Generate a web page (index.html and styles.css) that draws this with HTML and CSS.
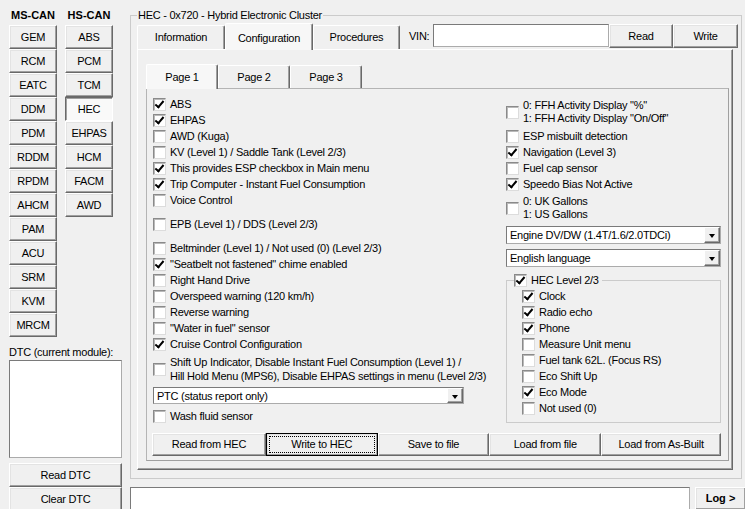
FILE: index.html
```html
<!DOCTYPE html>
<html lang="en">

<head>
  <meta charset="UTF-8">
  <meta name="viewport" content="width=device-width, initial-scale=1.0">
  <title>HEC - Configuration</title>
  <link rel="stylesheet" href="styles.css">
</head>

<body>
  <div class="app">
    <!-- module list -->
    <aside class="side">
      <div class="can">
        <div class="can-col">
          <h3>MS-CAN</h3>
          <button class="btn">GEM</button>
          <button class="btn">RCM</button>
          <button class="btn">EATC</button>
          <button class="btn">DDM</button>
          <button class="btn">PDM</button>
          <button class="btn">RDDM</button>
          <button class="btn">RPDM</button>
          <button class="btn">AHCM</button>
          <button class="btn">PAM</button>
          <button class="btn">ACU</button>
          <button class="btn">SRM</button>
          <button class="btn">KVM</button>
          <button class="btn">MRCM</button>
        </div>
        <div class="can-col">
          <h3>HS-CAN</h3>
          <button class="btn">ABS</button>
          <button class="btn">PCM</button>
          <button class="btn">TCM</button>
          <button class="btn down">HEC</button>
          <button class="btn">EHPAS</button>
          <button class="btn">HCM</button>
          <button class="btn">FACM</button>
          <button class="btn">AWD</button>
        </div>
      </div>
      <div class="dtc-label">DTC (current module):</div>
      <div class="field dtc-box"></div>
      <button class="btn wide read-dtc">Read DTC</button>
      <button class="btn wide">Clear DTC</button>
    </aside>

    <main class="main">
      <fieldset class="group module">
        <legend>HEC - 0x720 - Hybrid Electronic Cluster</legend>

        <!-- tabs + VIN -->
        <div class="topbar">
          <div class="tab main-tab">Information</div>
          <div class="tab main-tab active">Configuration</div>
          <div class="tab main-tab narrow">Procedures</div>
          <span class="vin-label">VIN:</span>
          <div class="field vin"></div>
          <button class="btn vin-btn">Read</button>
          <button class="btn vin-btn write">Write</button>
        </div>

        <div class="tabpanel">
          <div class="pagetabs">
            <div class="tab page-tab active">Page 1</div>
            <div class="tab page-tab">Page 2</div>
            <div class="tab page-tab">Page 3</div>
          </div>

          <div class="page">
            <div class="cols">
              <div class="col-left">
                <label class="opt"><span class="chk on"></span>ABS</label>
                <label class="opt"><span class="chk on"></span>EHPAS</label>
                <label class="opt"><span class="chk"></span>AWD (Kuga)</label>
                <label class="opt"><span class="chk"></span>KV (Level 1) / Saddle Tank (Level 2/3)</label>
                <label class="opt"><span class="chk on"></span>This provides ESP checkbox in Main menu</label>
                <label class="opt"><span class="chk on"></span>Trip Computer - Instant Fuel Consumption</label>
                <label class="opt"><span class="chk"></span>Voice Control</label>
                <label class="opt sep"><span class="chk"></span>EPB (Level 1) / DDS (Level 2/3)</label>
                <label class="opt sep"><span class="chk"></span>Beltminder (Level 1) / Not used (0) (Level 2/3)</label>
                <label class="opt"><span class="chk on"></span>"Seatbelt not fastened" chime enabled</label>
                <label class="opt"><span class="chk"></span>Right Hand Drive</label>
                <label class="opt"><span class="chk"></span>Overspeed warning (120 km/h)</label>
                <label class="opt"><span class="chk"></span>Reverse warning</label>
                <label class="opt"><span class="chk"></span>"Water in fuel" sensor</label>
                <label class="opt"><span class="chk on"></span>Cruise Control Configuration</label>
                <label class="opt two shift"><span class="chk"></span><span>Shift Up Indicator, Disable Instant Fuel Consumption (Level 1) /<br>Hill Hold Menu (MPS6), Disable EHPAS settings in menu (Level 2/3)</span></label>
                <div class="field combo ptc"><span class="combo-text">PTC (status report only)</span><span class="combo-btn"></span></div>
                <label class="opt wash"><span class="chk"></span>Wash fluid sensor</label>
              </div>

              <div class="col-right">
                <label class="opt two ffh"><span class="chk"></span><span>0: FFH Activity Display "%"<br>1: FFH Activity Display "On/Off"</span></label>
                <label class="opt after-two"><span class="chk"></span>ESP misbuilt detection</label>
                <label class="opt"><span class="chk on"></span>Navigation (Level 3)</label>
                <label class="opt"><span class="chk"></span>Fuel cap sensor</label>
                <label class="opt"><span class="chk on"></span>Speedo Bias Not Active</label>
                <label class="opt two gallons"><span class="chk"></span><span>0: UK Gallons<br>1: US Gallons</span></label>
                <div class="field combo small"><span class="combo-text">Engine DV/DW (1.4T/1.6/2.0TDCi)</span><span class="combo-btn"></span></div>
                <div class="field combo small"><span class="combo-text">English language</span><span class="combo-btn"></span></div>

                <fieldset class="group level">
                  <legend><label class="opt"><span class="chk on"></span>HEC Level 2/3</label></legend>
                  <div class="level-list">
                    <label class="opt"><span class="chk on"></span>Clock</label>
                    <label class="opt"><span class="chk on"></span>Radio echo</label>
                    <label class="opt"><span class="chk on"></span>Phone</label>
                    <label class="opt"><span class="chk"></span>Measure Unit menu</label>
                    <label class="opt"><span class="chk"></span>Fuel tank 62L. (Focus RS)</label>
                    <label class="opt"><span class="chk"></span>Eco Shift Up</label>
                    <label class="opt"><span class="chk on"></span>Eco Mode</label>
                    <label class="opt"><span class="chk"></span>Not used (0)</label>
                  </div>
                </fieldset>
              </div>
            </div>

            <div class="actions">
              <button class="btn act first">Read from HEC</button>
              <button class="btn act focus">Write to HEC</button>
              <button class="btn act">Save to file</button>
              <button class="btn act">Load from file</button>
              <button class="btn act last">Load from As-Built</button>
            </div>
          </div>
        </div>
      </fieldset>

      <!-- log line -->
      <div class="logbar">
        <div class="field logbox"></div>
        <button class="btn log">Log &gt;</button>
      </div>
    </main>
  </div>
</body>

</html>
```

FILE: styles.css
```css
/* base */
* {
  box-sizing: border-box;
}

body {
  margin: 0;
  background: #f0f0f0;
  font-family: "Liberation Sans", Arial, sans-serif;
  font-size: 11px;
  line-height: 13px;
  letter-spacing: -0.25px;
  color: #000;
  overflow: hidden;
}

.app {
  display: flex;
  width: 745px;
  height: 509px;
  overflow: hidden;
}

/* classic 3D button */
.btn {
  display: flex;
  align-items: center;
  justify-content: center;
  margin: 0;
  padding: 0;
  font: inherit;
  letter-spacing: inherit;
  color: #000;
  background: #f0f0f0;
  border: 1px solid;
  border-color: #fff #696969 #696969 #fff;
  box-shadow: inset -1px -1px #a0a0a0, inset 1px 1px #e3e3e3;
}

.btn.down {
  background: #f9f9f9;
  border-color: #696969 #fff #fff #696969;
  box-shadow: inset 1px 1px #a0a0a0;
}

.field {
  background: #fff;
  border: 1px solid;
  border-color: #7a7a7a #ababab #ababab #7a7a7a;
}

/* left side */
.side {
  width: 125px;
  flex: none;
  padding: 8px 0 0 9px;
}

.can {
  display: flex;
  gap: 8px;
  align-items: flex-start;
}

.can-col {
  width: 48px;
  display: flex;
  flex-direction: column;
}

.can-col h3 {
  margin: 0 0 3px;
  font-size: 11px;
  line-height: 14px;
  font-weight: bold;
  letter-spacing: 0;
  text-align: center;
}

.can-col .btn {
  height: 24px;
}

.dtc-label {
  margin-top: 8px;
  line-height: 14px;
}

.dtc-box {
  width: 113px;
  height: 98px;
  margin-top: 1px;
}

.btn.wide {
  width: 113px;
  height: 24px;
}

.read-dtc {
  margin-top: 5px;
}

/* main area */
.main {
  width: 620px;
  flex: none;
  display: flex;
  flex-direction: column;
}

.group {
  margin: 0;
  min-width: 0;
  border: 1px solid #cbcbcb;
}

.module {
  margin: 8px 3px 0 5px;
  padding: 1px 8px 8px 6px;
}

.module > legend {
  padding: 0 1px;
  line-height: 14px;
}

.topbar {
  display: flex;
  align-items: flex-end;
  height: 26px;
  margin-right: -5px;
}

.tab {
  display: flex;
  align-items: center;
  justify-content: center;
  height: 24px;
  background: #f0f0f0;
  border: 1px solid;
  border-bottom: none;
  border-color: #fff #696969 #fff #fff;
  border-radius: 2px 2px 0 0;
  box-shadow: inset -1px 0 #a0a0a0;
}

.main-tab {
  width: 88px;
}

.main-tab.narrow {
  width: 87px;
}

.tab.active {
  position: relative;
  z-index: 1;
  height: 27px;
  margin-bottom: -1px;
  background: #f7f7f7;
  padding-top: 2px;
}

.vin-label {
  align-self: flex-start;
  width: 24px;
  margin: 7px 0 0 9px;
}

.vin {
  align-self: flex-start;
  width: 176px;
  height: 23px;
  margin-top: 1px;
}

.vin-btn {
  align-self: flex-start;
  width: 64px;
  height: 24px;
  margin-top: 1px;
}

.vin-btn.write {
  width: 65px;
}

.tabpanel {
  border: 1px solid;
  border-color: #fff #696969 #696969 #fff;
  box-shadow: inset -1px -1px #a0a0a0;
  padding: 14px 3px 8px 8px;
}

.pagetabs {
  display: flex;
  align-items: flex-end;
  height: 24px;
}

.page-tab {
  width: 72px;
  height: 23px;
}

.page-tab.active {
  height: 25px;
  padding-top: 1px;
}

.page {
  border: 1px solid;
  border-color: #b4b4b4 #a0a0a0 #a0a0a0 #b4b4b4;
  padding: 7px 7px 4px 6px;
}

.cols {
  display: flex;
}

.col-left {
  width: 353px;
}

.col-right {
  width: 215px;
}

/* check rows */
.opt {
  display: flex;
  align-items: center;
  height: 16px;
  white-space: nowrap;
}

.chk {
  position: relative;
  flex: none;
  width: 13px;
  height: 13px;
  margin-right: 4px;
  background: #fff;
  border: 1px solid;
  border-color: #8a8a8a #dcdcdc #dcdcdc #8a8a8a;
  box-shadow: inset 1px 1px #b9b9b9;
}

.chk.on::after {
  content: "";
  position: absolute;
  left: 3px;
  top: 0;
  width: 3px;
  height: 7px;
  border: solid #000;
  border-width: 0 2px 2px 0;
  transform: rotate(40deg);
}

.opt.sep {
  margin-top: 8px;
}

.opt.two {
  height: auto;
}

.opt.shift {
  margin-top: 3px;
  line-height: 14px;
}

.opt.ffh,
.opt.gallons {
  margin-top: 3px;
}

.after-two {
  margin-top: 3px;
}

/* combo boxes */
.combo {
  display: flex;
  align-items: stretch;
  height: 18px;
}

.combo-text {
  flex: 1;
  padding-left: 3px;
  line-height: 16px;
}

.combo-btn {
  position: relative;
  width: 16px;
  flex: none;
  background: #f0f0f0;
  border: 1px solid;
  border-color: #fff #696969 #696969 #fff;
  box-shadow: inset -1px -1px #a0a0a0;
}

.combo-btn::after {
  content: "";
  position: absolute;
  left: 4px;
  top: 6px;
  border-left: 3.5px solid transparent;
  border-right: 3.5px solid transparent;
  border-top: 4px solid #000;
}

.combo.ptc {
  width: 311px;
  margin-top: 4px;
  height: 17px;
}

.combo.small {
  width: 215px;
  margin-top: 5px;
}

.opt.wash {
  margin-top: 4px;
}

/* HEC level group */
.level {
  margin-top: 5px;
  padding: 0 6px 6px 7px;
}

.level > legend {
  padding: 0 3px 0 0;
}

.level-list {
  padding-left: 8px;
}

/* bottom action buttons */
.actions {
  display: flex;
  margin-top: 9px;
  margin-left: -1px;
}

.act {
  width: 112px;
  height: 23px;
}

.act.first {
  width: 114px;
}

.act.last {
  width: 120px;
}

.act.focus {
  border-color: #000;
  outline: 1px dotted #000;
  outline-offset: -4px;
}

/* log line */
.logbar {
  display: flex;
  gap: 5px;
  margin: 8px 0 0 5px;
}

.logbox {
  flex: 1;
  height: 23px;
}

.btn.log {
  width: 50px;
  height: 23px;
  font-weight: bold;
  letter-spacing: 0;
  border-right: none;
}
```
